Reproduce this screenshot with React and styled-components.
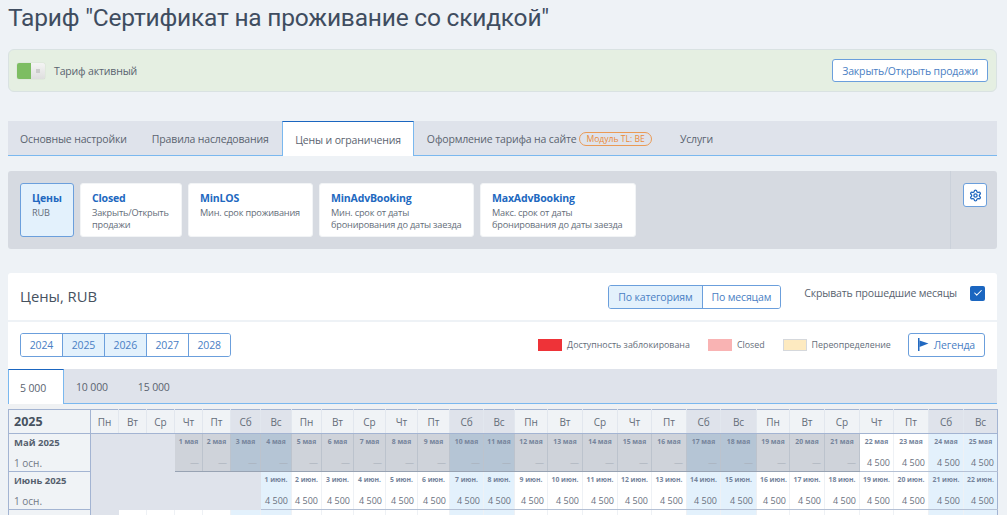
import React from 'react'
import styled, { createGlobalStyle } from 'styled-components'
import { Settings, Check } from 'lucide-react'

const GlobalStyle = createGlobalStyle`
  html, body {
    margin: 0;
    padding: 0;
    height: 100%;
    overflow: hidden;
    background: #eef2f6;
    font-family: "Open Sans", "Noto Sans", sans-serif;
    color: #4d5766;
  }
  * { box-sizing: border-box; }
`

const Page = styled.div`
  height: 515px;
  overflow: hidden;
  padding: 0 10px 0 8px;
`

const Title = styled.h1`
  margin: 0;
  height: 49px;
  font-family: Roboto, "Liberation Sans", sans-serif;
  font-size: 24.5px;
  letter-spacing: -0.2px;
  line-height: 36px;
  font-weight: 400;
  color: #3f4d60;
`

const StatusPanel = styled.div`
  height: 43px;
  display: flex;
  align-items: center;
  justify-content: space-between;
  padding: 0 8px;
  background: #e5efe2;
  border: 1px solid #d9e2e2;
  border-radius: 6px;
`

const StatusLeft = styled.div`
  display: flex;
  align-items: center;
  gap: 9px;
  font-size: 10.5px;
  letter-spacing: -0.15px;
  color: #59636f;
`

const Toggle = styled.div`
  display: flex;
  width: 28px;
  height: 16px;
  border-radius: 2px;
  overflow: hidden;
  background: linear-gradient(#f4f4f4, #dedede);
  box-shadow: 0 0 1px rgba(0, 0, 0, 0.25);
`

const ToggleOn = styled.span`
  width: 14px;
  background: #7dbd62;
`

const ToggleKnob = styled.span`
  flex: 1;
  display: flex;
  align-items: center;
  justify-content: center;
  &::after {
    content: '';
    width: 4px;
    height: 4px;
    background: #ccc;
  }
`

const OutlineButton = styled.button`
  font-family: inherit;
  font-size: 10.5px;
  letter-spacing: -0.15px;
  color: #4a80c4;
  background: #fff;
  border: 1px solid #6b9fdc;
  border-radius: 3px;
  height: ${(p) => p.$height || 23}px;
  padding: 0 9px;
  display: inline-flex;
  align-items: center;
  gap: 5px;
`

const Tabs = styled.div`
  margin-top: ${(p) => p.$top || 0}px;
  height: ${(p) => p.$height}px;
  display: flex;
  background: #dfe3eb;
  border-bottom: 1px solid #7ab8ef;
`

const Tab = styled.div`
  height: ${(p) => p.$height}px;
  padding: 1px ${(p) => p.$right ?? p.$pad}px 0 ${(p) => p.$pad}px;
  display: flex;
  align-items: center;
  gap: 3px;
  font-size: 10.5px;
  letter-spacing: -0.15px;
  color: #5b6470;
  white-space: nowrap;
  ${(p) =>
    p.$active &&
    `
    background: #fff;
    border: 1px solid #7ab8ef;
    border-top: 1px solid #1b66c0;
    border-bottom: 0;
  `}
`

const ModuleBadge = styled.span`
  font-size: 8.6px;
  letter-spacing: 0;
  line-height: 12px;
  color: #ea8a3a;
  border: 1px solid #ea9a55;
  border-radius: 7px;
  padding: 0 6px;
`

const FilterPanel = styled.div`
  margin-top: 15px;
  height: 78px;
  display: flex;
  background: #d6dae1;
  border-radius: 3px;
`

const FilterList = styled.div`
  flex: 1;
  display: flex;
  gap: 6px;
  padding: 12px;
`

const FilterCard = styled.div`
  width: ${(p) => p.$width}px;
  height: 54px;
  padding: 7px 4px 0 11px;
  border-radius: 3px;
  background: ${(p) => (p.$active ? '#e3f1fc' : '#fff')};
  border: 1px solid ${(p) => (p.$active ? '#6b9fdc' : '#f2f4f6')};
`

const FilterName = styled.div`
  font-size: 10.5px;
  letter-spacing: -0.15px;
  line-height: 14px;
  font-weight: 700;
  color: #2168c0;
`

const FilterHint = styled.div`
  margin-top: 2px;
  font-size: 9.2px;
  letter-spacing: -0.2px;
  line-height: 12px;
  color: #646d79;
`

const GearCell = styled.div`
  width: 47px;
  padding: 12px 11px 0 12px;
  border-left: 1px solid #cbd1da;
`

const IconButton = styled(OutlineButton)`
  width: 24px;
  height: 24px;
  padding: 0;
  justify-content: center;
  color: #2168c0;
`

const Card = styled.section`
  margin-top: 24px;
  background: #fff;
  border-radius: 3px 3px 0 0;
`

const CardHeader = styled.div`
  height: 49px;
  display: flex;
  align-items: flex-start;
  justify-content: space-between;
  padding: 12px 12px 0;
  border-bottom: 2px solid #eef2f6;
`

const CardTitle = styled.h2`
  margin: -1px 0 0;
  font-size: 14.8px;
  line-height: 24px;
  font-weight: 400;
  color: #47525f;
`

const HeaderControls = styled.div`
  display: flex;
  align-items: flex-start;
`

const Segment = styled.div`
  display: flex;
  height: 24px;
  border: 1px solid #6b9fdc;
  border-radius: 3px;
  overflow: hidden;
`

const SegmentItem = styled.div`
  display: flex;
  align-items: center;
  justify-content: center;
  padding: 0 ${(p) => p.$pad}px;
  font-size: 10.5px;
  letter-spacing: -0.15px;
  color: #4a80c4;
  background: ${(p) => (p.$active ? '#e3f1fc' : '#fff')};
  & + & {
    border-left: 1px solid #6b9fdc;
  }
`

const HidePast = styled.div`
  margin-left: 23px;
  display: flex;
  align-items: center;
  gap: 13px;
  font-size: 10.5px;
  letter-spacing: -0.15px;
  line-height: 16px;
  color: #59636f;
`

const CheckBox = styled.span`
  width: 15px;
  height: 15px;
  border-radius: 2px;
  background: #1b66c0;
  color: #fff;
  display: flex;
  align-items: center;
  justify-content: center;
`

const Toolbar = styled.div`
  height: 47px;
  display: flex;
  align-items: center;
  justify-content: space-between;
  padding: 0 12px 2px;
`

const Legend = styled.div`
  display: flex;
  align-items: center;
`

const LegendItem = styled.div`
  display: flex;
  align-items: center;
  gap: 5px;
  margin-right: ${(p) => p.$gap}px;
  font-size: 8.85px;
  color: #646d79;
`

const Swatch = styled.span`
  width: 24px;
  height: 12px;
  background: ${(p) => p.$color};
  border: 1px solid ${(p) => p.$line || p.$color};
`

const Gap = styled.div`
  height: 5px;
  background: #eff1f3;
`

const Calendar = styled.table`
  width: 989px;
  table-layout: fixed;
  border-collapse: collapse;
  background: #fff;
`

const ColWidth = styled.col`
  width: ${(p) => p.$w}px;
`

const YearCell = styled.th`
  height: 24px;
  padding: 0 0 0 5px;
  text-align: left;
  font-size: 12.5px;
  font-weight: 700;
  color: #47525f;
  background: #f0f3f6;
  border: 1px solid #a3b4d2;
`

const DayHead = styled.th`
  padding: 0;
  font-size: 10px;
  font-weight: 400;
  color: #646d79;
  background: ${(p) => (p.$weekend ? '#dfe3eb' : '#f0f3f6')};
  border: 1px solid #e2e7ee;
  border-top: 1px solid #a3b4d2;
  border-bottom: 1px solid #a3b4d2;
  &:last-child {
    border-right: 1px solid #a3b4d2;
  }
`

const MonthCell = styled.th`
  padding: 0 0 0 5px;
  height: 38px;
  vertical-align: top;
  text-align: left;
  background: #f0f3f6;
  border: 1px solid #a3b4d2;
`

const MonthName = styled.div`
  margin-top: 2px;
  font-size: 9.5px;
  line-height: 13px;
  font-weight: 700;
  color: #555f6e;
`

const RoomName = styled.div`
  margin-top: 7px;
  font-size: 10px;
  line-height: 14px;
  font-weight: 400;
  color: #707986;
`

const cellColors = {
  empty: '#dfe3eb',
  open: '#fff',
  openWeekend: '#e3f1fc',
  past: '#cfd3da',
  pastWeekend: '#b5c5d5',
}

const DayCell = styled.td`
  padding: 0;
  height: 38px;
  background: ${(p) => cellColors[p.$kind]};
  border-right: 1px solid ${(p) => (p.$kind === 'empty' ? '#dfe3eb' : p.$kind.startsWith('past') ? '#bcc3cd' : '#eef1f5')};
  border-bottom: 1px solid ${(p) => (p.$kind === 'empty' ? '#dfe3eb' : p.$kind.startsWith('past') ? '#98a3b3' : '#b5c1d5')};
  &:last-child {
    border-right: 1px solid #a3b4d2;
  }
`

const CellInner = styled.div`
  height: 37px;
  padding: 2px 3px 0;
  display: flex;
  flex-direction: column;
  justify-content: space-between;
  overflow: hidden;
`

const DayDate = styled.div`
  text-align: center;
  font-size: 6.8px;
  line-height: 12px;
  font-weight: 700;
  white-space: nowrap;
  color: #75849b;
`

const DayPrice = styled.div`
  text-align: right;
  padding-bottom: 1px;
  font-size: 9px;
  line-height: 14px;
  color: ${(p) => (p.$past ? '#a6adb8' : '#687280')};
  white-space: nowrap;
`

const years = [
  { y: '2024' },
  { y: '2025', active: true },
  { y: '2026', active: true },
  { y: '2027' },
  { y: '2028' },
]

const filters = [
  { name: 'Цены', hint: 'RUB', width: 54, active: true },
  { name: 'Closed', hint: 'Закрыть/Открыть продажи', width: 102 },
  { name: 'MinLOS', hint: 'Мин. срок проживания', width: 125 },
  { name: 'MinAdvBooking', hint: 'Мин. срок от даты бронирования до даты заезда', width: 155 },
  { name: 'MaxAdvBooking', hint: 'Макс. срок от даты бронирования до даты заезда', width: 156 },
]

const dayNames = ['Пн', 'Вт', 'Ср', 'Чт', 'Пт', 'Сб', 'Вс']
const columns = [
  28, 28, 28, 28, 28, 30, 31,
  30, 32, 32, 32, 32, 34, 31,
  33, 35, 35, 34, 35, 34, 36,
  33, 35, 35, 34, 35, 35, 34,
]

const buildRow = (first, offset, suffix, pastUntil) =>
  Array.from({ length: 28 }, (_, i) => {
    const day = i - offset + first
    const weekend = i % 7 > 4
    if (i < offset) return { kind: 'empty' }
    const past = day <= pastUntil
    return {
      date: `${day} ${suffix}`,
      price: past ? '—' : '4 500',
      past,
      kind: past ? (weekend ? 'pastWeekend' : 'past') : weekend ? 'openWeekend' : 'open',
    }
  })

// the third row only peeks in at the bottom of the window, its labels are below the fold
const rows = [
  { month: 'Май 2025', cells: buildRow(1, 3, 'мая', 21) },
  { month: 'Июнь 2025', cells: buildRow(1, 6, 'июн.', 0) },
  { month: '', cells: buildRow(1, 1, 'июл.', 0).map((c) => ({ kind: c.kind })) },
]

const Flag = () => (
  <svg width="11" height="13" viewBox="0 0 11 13" fill="#2168c0">
    <rect x="0" y="0" width="1.5" height="13" />
    <path d="M1.5 2.5 L10.5 5.5 L1.5 9 Z" />
  </svg>
)

export default function App() {
  return (
    <Page>
      <GlobalStyle />
      <Title>Тариф "Сертификат на проживание со скидкой"</Title>
      <StatusPanel>
        <StatusLeft>
          <Toggle>
            <ToggleOn />
            <ToggleKnob />
          </Toggle>
          Тариф активный
        </StatusLeft>
        <OutlineButton>Закрыть/Открыть продажи</OutlineButton>
      </StatusPanel>

      <Tabs $top={29} $height={35}>
        <Tab $height={34} $pad={12}>Основные настройки</Tab>
        <Tab $height={34} $pad={13} $right={13.5}>Правила наследования</Tab>
        <Tab $height={35} $pad={12} $active>Цены и ограничения</Tab>
        <Tab $height={34} $pad={13}>
          Оформление тарифа на сайте <ModuleBadge>Модуль TL: BE</ModuleBadge>
        </Tab>
        <Tab $height={34} $pad={15}>Услуги</Tab>
      </Tabs>

      <FilterPanel>
        <FilterList>
          {filters.map((f) => (
            <FilterCard key={f.name} $width={f.width} $active={f.active}>
              <FilterName>{f.name}</FilterName>
              <FilterHint>{f.hint}</FilterHint>
            </FilterCard>
          ))}
        </FilterList>
        <GearCell>
          <IconButton>
            <Settings size={13} strokeWidth={2.5} />
          </IconButton>
        </GearCell>
      </FilterPanel>

      <Card>
        <CardHeader>
          <CardTitle>Цены, RUB</CardTitle>
          <HeaderControls>
            <Segment>
              <SegmentItem $pad={9} $active>По категориям</SegmentItem>
              <SegmentItem $pad={9}>По месяцам</SegmentItem>
            </Segment>
            <HidePast>
              Скрывать прошедшие месяцы
              <CheckBox><Check size={10} strokeWidth={2.5} /></CheckBox>
            </HidePast>
          </HeaderControls>
        </CardHeader>

        <Toolbar>
          <Segment>
            {years.map((y) => (
              <SegmentItem key={y.y} $pad={8.75} $active={y.active}>{y.y}</SegmentItem>
            ))}
          </Segment>
          <Legend>
            <LegendItem $gap={18}><Swatch $color="#ee3338" />Доступность заблокирована</LegendItem>
            <LegendItem $gap={18}><Swatch $color="#f9b3b3" />Closed</LegendItem>
            <LegendItem $gap={17}><Swatch $color="#fdeac0" $line="#d5d8dc" />Переопределение</LegendItem>
            <OutlineButton $height={24}><Flag />Легенда</OutlineButton>
          </Legend>
        </Toolbar>

        <Tabs $height={35}>
          <Tab $height={35} $pad={11} $right={17} $active>5 000</Tab>
          <Tab $height={34} $pad={12} $right={18}>10 000</Tab>
          <Tab $height={34} $pad={12} $right={18}>15 000</Tab>
        </Tabs>
      </Card>
      <Gap />

      <Calendar>
        <colgroup>
          <ColWidth $w={82} />
          {columns.map((w, i) => <ColWidth key={i} $w={w} />)}
        </colgroup>
        <thead>
          <tr>
            <YearCell>2025</YearCell>
            {columns.map((_, i) => (
              <DayHead key={i} $weekend={i % 7 > 4}>{dayNames[i % 7]}</DayHead>
            ))}
          </tr>
        </thead>
        <tbody>
          {rows.map((r, n) => (
            <tr key={n}>
              <MonthCell>
                {r.month && (
                  <>
                    <MonthName>{r.month}</MonthName>
                    <RoomName>1 осн.</RoomName>
                  </>
                )}
              </MonthCell>
              {r.cells.map((c, i) => (
                <DayCell key={i} $kind={c.kind}>
                  {c.date && (
                    <CellInner>
                      <DayDate>{c.date}</DayDate>
                      <DayPrice $past={c.past}>{c.price}</DayPrice>
                    </CellInner>
                  )}
                </DayCell>
              ))}
            </tr>
          ))}
        </tbody>
      </Calendar>
    </Page>
  )
}
